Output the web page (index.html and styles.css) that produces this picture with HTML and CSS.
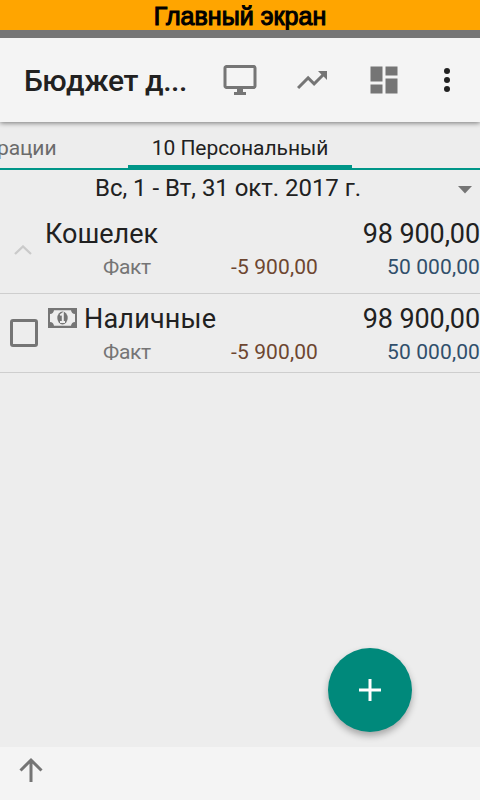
FILE: index.html
```html
<!DOCTYPE html>
<html lang="ru">
<head>
<meta charset="utf-8">
<title>Главный экран</title>
<link rel="stylesheet" href="styles.css">
</head>
<body>
<div class="banner">Главный экран</div>
<div class="status"></div>
<header class="appbar">
  <h1>Бюджет д...</h1>
  <nav class="actions">
    <svg viewBox="0 0 24 24"><path d="M21 2H3c-1.1 0-2 .9-2 2v12c0 1.1.9 2 2 2h7v2H8v2h8v-2h-2v-2h7c1.1 0 2-.9 2-2V4c0-1.1-.9-2-2-2zm0 14H3V4h18v12z"/></svg>
    <svg viewBox="0 0 24 24"><path d="M16 6l2.29 2.29-4.88 4.88-4-4L2 16.59 3.41 18l6-6 4 4 6.3-6.29L22 12V6z"/></svg>
    <svg viewBox="0 0 24 24"><path d="M3 13h8V3H3v10zm0 8h8v-6H3v6zm10 0h8V11h-8v10zm0-18v6h8V3h-8z"/></svg>
    <svg class="more" viewBox="0 0 24 24"><circle cx="12" cy="6" r="2"/><circle cx="12" cy="12" r="2"/><circle cx="12" cy="18" r="2"/></svg>
  </nav>
</header>
<div class="tabs">
  <div class="tab prev"><span>рации</span></div>
  <div class="tab active"><span>10 Персональный</span></div>
  <div class="tab"></div>
</div>
<main>
  <div class="period"><span class="date">Вс, 1 - Вт, 31 окт. 2017 г.</span><svg class="caret" viewBox="0 0 14 8"><path d="M0 0h14L7 7.5z"/></svg></div>
  <section class="row group">
    <div class="lead"><svg class="chevron" viewBox="0 0 18 10"><path d="M1 9l8-7.5L17 9"/></svg></div>
    <div class="content">
      <div class="line"><span class="name">Кошелек</span><span class="total">98 900,00</span></div>
      <div class="facts"><span class="label">Факт</span><span class="out">-5 900,00</span><span class="in">50 000,00</span></div>
    </div>
  </section>
  <section class="row item">
    <div class="lead"><span class="checkbox"></span></div>
    <div class="content">
      <div class="line">
        <svg class="cash" viewBox="0 0 29 20"><path fill-rule="evenodd" d="M0 0h29v20H0zM6 2.200A4.500 4.500 0 0 1 2 6v8a4.500 4.500 0 0 1 4 3.800h17a4.500 4.500 0 0 1 4-3.800V6a4.500 4.500 0 0 1-4-3.800z"/><ellipse cx="14.500" cy="10" rx="5.2" ry="6.5"/><path class="one" d="M12.2 7.2l2.6-1.8v8M12 14h5"/></svg>
        <span class="name">Наличные</span><span class="total">98 900,00</span></div>
      <div class="facts"><span class="label">Факт</span><span class="out">-5 900,00</span><span class="in">50 000,00</span></div>
    </div>
  </section>
  <button class="fab" aria-label="Добавить"><svg viewBox="0 0 22 22"><path d="M11 0v22M0 11h22"/></svg></button>
</main>
<footer><svg viewBox="0 0 26 26"><path d="M13 25V3M2.500 13.500L13 3l10.500 10.500"/></svg></footer>
</body>
</html>
```
FILE: styles.css
```css
* { box-sizing: border-box; }
body {
  margin: 0;
  width: 480px;
  height: 800px;
  overflow: hidden;
  display: flex;
  flex-direction: column;
  background: #ededed;
  color: #212121;
  font-family: Roboto, sans-serif;
}
svg { display: block; flex: none; }
span { white-space: nowrap; }
.banner {
  height: 30px;
  background: #ffa500;
  color: #000;
  text-align: center;
  font: 25px/33px "Liberation Sans", sans-serif;
  letter-spacing: 0.05px;
  -webkit-text-stroke: 1.1px #000;
}
.status { position: relative; z-index: 1; height: 8px; background: #757575; }
.appbar {
  position: relative;
  height: 84px;
  padding: 0 15px 0 24px;
  display: flex;
  align-items: center;
  justify-content: space-between;
  background: #f4f4f4;
  box-shadow: 0 1px 5px rgba(0, 0, 0, .5);
}
h1 { margin: 0; font-size: 30px; font-weight: 500; line-height: 36px; padding-top: 2px; letter-spacing: -0.4px; }
.actions { display: flex; gap: 36px; }
.actions svg { width: 36px; height: 36px; fill: #757575; }
.actions .more { fill: #212121; margin-left: -9px; }
.tabs { height: 48px; display: flex; border-bottom: 2px solid #009688; font-size: 21px; line-height: 52px; }
.tab { height: 48px; width: 128px; }
.prev { color: #6b6b6b; letter-spacing: -0.1px; }
.prev span { margin-left: -3px; }
.active { width: 224px; text-align: center; border-bottom: 5px solid #009688; letter-spacing: -0.05px; }
main { position: relative; flex: 1; }
.period { height: 40px; display: flex; align-items: flex-start; padding: 0 8px 0 95px; font-size: 24px; line-height: 36px; letter-spacing: -0.04px; }
.caret { width: 14px; height: 8px; margin: 16px 0 0 auto; fill: #757575; }
.row { display: flex; border-bottom: 1px solid #cecece; }
.group { height: 84px; }
.item { height: 79px; }
.lead { width: 45px; flex: none; }
.content { flex: 1; }
.line { display: flex; align-items: flex-start; height: 41px; font-size: 27px; line-height: 48px; }
.item .line { height: 42px; line-height: 50px; }
.item .name { letter-spacing: 0.2px; }
.total { margin-left: auto; letter-spacing: -0.1px; }
.facts { display: grid; grid-template-columns: 58px 215px 1fr; font-size: 21px; line-height: 32px; }
.label { grid-column: 2; grid-row: 1; color: #757575; letter-spacing: -0.3px; }
.out { grid-column: 2; grid-row: 1; text-align: right; color: #6d4630; letter-spacing: 0.12px; }
.in { grid-column: 3; grid-row: 1; text-align: right; color: #314f6b; letter-spacing: 0.12px; }
.chevron { width: 18px; height: 10px; margin: 35px 0 0 14px; fill: none; stroke: #cacaca; stroke-width: 2.3; }
.checkbox { display: block; width: 28px; height: 28px; margin: 25px 0 0 10px; border: 3px solid #757575; border-radius: 3px; }
.cash { width: 29px; height: 20px; margin: 14px 7px 0 3px; fill: #757575; }
.cash .one { fill: none; stroke: #ededed; stroke-width: 2; }
.fab {
  position: absolute;
  right: 68px;
  bottom: 15px;
  width: 84px;
  height: 84px;
  padding: 0;
  border: 0;
  border-radius: 50%;
  display: grid;
  place-items: center;
  background: #00897b;
  box-shadow: 0 4px 7px rgba(0, 0, 0, .3);
}
.fab svg { width: 22px; height: 22px; stroke: #fff; stroke-width: 3; }
footer { position: relative; height: 53px; padding: 10px 18px; background: #f4f4f4; }
footer svg { width: 26px; height: 26px; fill: none; stroke: #757575; stroke-width: 3; }
```
